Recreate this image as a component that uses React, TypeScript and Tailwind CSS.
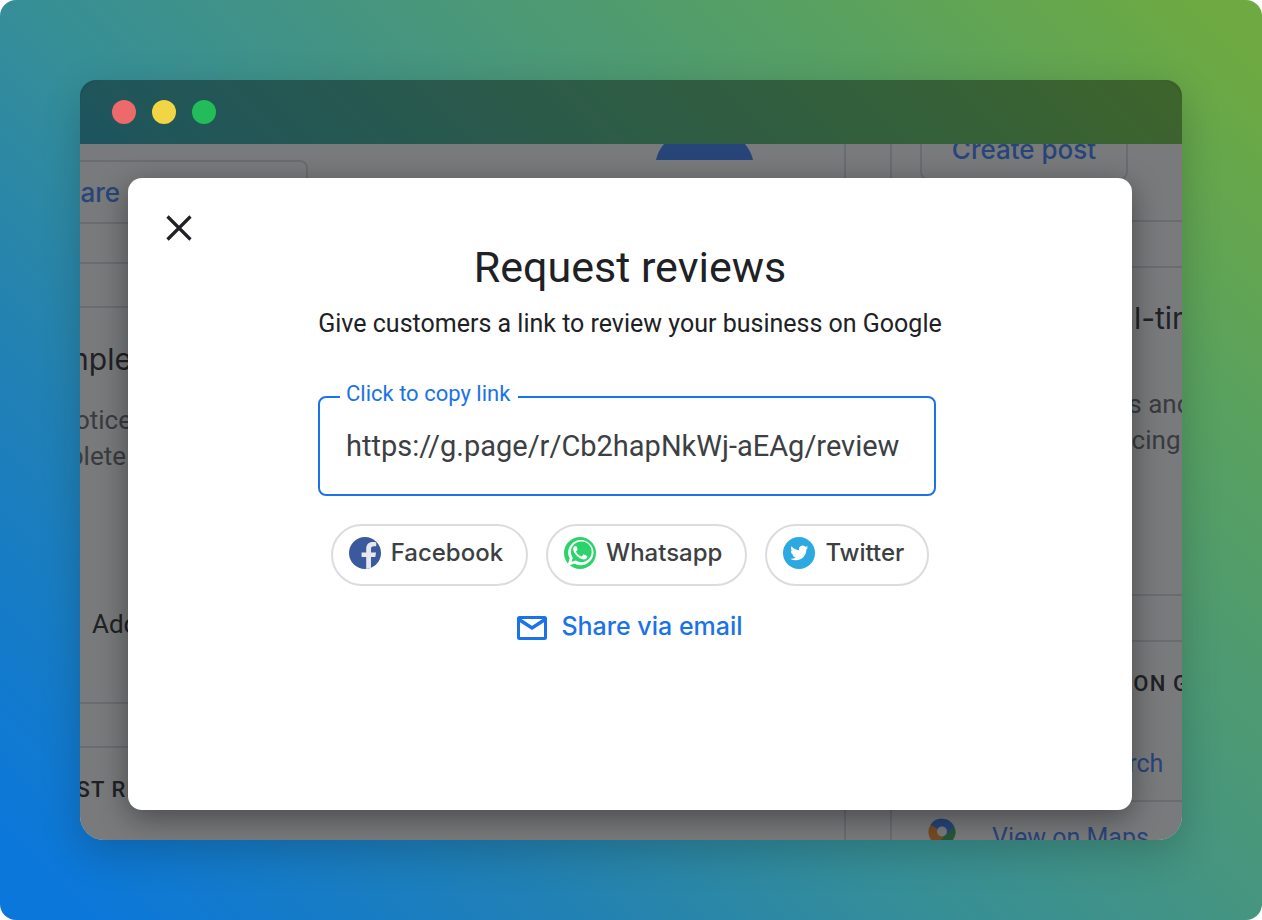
import React from "react";

function FacebookIcon() {
  return (
    <svg viewBox="0 0 32 32" className="size-8 shrink-0" aria-hidden="true">
      <circle cx="16" cy="16" r="16" fill="#3b5a9e" />
      <path
        d="M17.2 31.9V19.9h-4.6v-4.4h4.6v-3.4c0-4.4 2.6-7 6.6-7 1.4 0 2.6.1 3.4.3v3.9h-2.3c-2.3 0-2.9 1.1-2.9 2.8v3.4h5l-.7 4.4H22v10.9c-1.5.7-3.2 1.1-4.8 1.1z"
        fill="#e6e8ee"
      />
    </svg>
  );
}

function WhatsappIcon() {
  return (
    <svg viewBox="0 0 32 32" className="size-8 shrink-0" aria-hidden="true">
      <circle cx="16" cy="16" r="16" fill="#2bd46a" />
      <path d="M4.200 28l1.900-6.600A12.200 12.200 0 1 1 10.800 26.200z" fill="#fff" stroke="#fff" strokeWidth="1" strokeLinejoin="round" />
      <path d="M7.600 24.700l1.100-4A10.400 10.400 0 1 1 11.700 23.600z" fill="#2bd46a" />
      <path
        d="M12.700 9.800c-.3-.7-.6-.7-1-.7-1.200 0-2.500 1.100-2.500 3.200 0 2 1.400 3.900 1.700 4.300 1.700 2.500 3.900 4.500 6.600 5.500 2.500.9 4.800.6 5.600-1.500.3-.8.3-1.500.1-1.700-.3-.3-2.700-1.400-3.200-1.500-.4-.1-.6 0-.9.400l-1.100 1.400c-.3.300-.6.300-1 .1-2.200-1-3.700-2.400-4.800-4.400-.2-.4-.1-.6.200-.9.500-.5 1-1.200 1.100-1.500.1-.3 0-.6-.1-.8z"
        fill="#fff"
      />
    </svg>
  );
}

function TwitterIcon() {
  return (
    <svg viewBox="0 0 32 32" className="size-8 shrink-0" aria-hidden="true">
      <circle cx="16" cy="16" r="16" fill="#2ca9e1" />
      <g transform="translate(7.2 7) scale(0.75)">
        <path
          d="M23.953 4.570a10 10 0 0 1-2.825.775 4.958 4.958 0 0 0 2.163-2.723c-.951.555-2.005.959-3.127 1.184a4.920 4.920 0 0 0-8.384 4.482C7.690 8.095 4.067 6.130 1.640 3.162a4.822 4.822 0 0 0-.666 2.475c0 1.710.870 3.213 2.188 4.096a4.904 4.904 0 0 1-2.228-.616v.060a4.923 4.923 0 0 0 3.946 4.827 4.996 4.996 0 0 1-2.212.085 4.936 4.936 0 0 0 4.604 3.417 9.867 9.867 0 0 1-6.102 2.105c-.39 0-.779-.023-1.170-.067a13.995 13.995 0 0 0 7.557 2.209c9.053 0 13.998-7.496 13.998-13.985 0-.21 0-.42-.015-.63A9.935 9.935 0 0 0 24 4.590z"
          fill="#fff"
        />
      </g>
    </svg>
  );
}

function MailIcon() {
  return (
    <svg viewBox="0 0 30 24" className="mt-1 h-6 w-[30px] shrink-0" aria-hidden="true">
      <rect x="1.500" y="1.500" width="27" height="21" rx="1" fill="none" stroke="#1a73e8" strokeWidth="3" />
      <path d="M2 3.500L15 12l13-8.500" fill="none" stroke="#1a73e8" strokeWidth="3.400" />
    </svg>
  );
}

function MapsIcon() {
  return (
    <svg viewBox="0 0 28 36" className="h-9 w-7 shrink-0" aria-hidden="true">
      <path d="M3 6A13.500 13.500 0 0 0 3 22l8-4 0-8z" fill="#fb8720" />
      <path d="M26 8A13.500 13.500 0 0 1 25 22L14 36 7 27 20 10z" fill="#34a853" />
      <path d="M2.500 7A13.500 13.500 0 0 1 26 8L18 18 10 11z" fill="#347bf5" />
      <path d="M3 22l4 5 9-8-6-3z" fill="#fb8720" />
      <circle cx="14" cy="13.500" r="5" fill="#fff" />
    </svg>
  );
}

function BackgroundPage() {
  return (
    <div aria-hidden="true" className="absolute inset-0 flex gap-11 overflow-hidden bg-white whitespace-nowrap">
      <div className="flex w-[766px] shrink-0 flex-col gap-[42px]">
        <div className="flex h-[120px] shrink-0 items-start border-r-2 border-b-2 border-[#dadce0]">
          <div className="mt-4 flex h-16 w-[228px] items-center rounded-tr-lg border-t-2 border-r-2 border-b-2 border-[#dadce0] font-['Inter',sans-serif] text-[26px] font-medium text-[#347bf5]">
            <span className="flex w-10 justify-end">Share</span>
          </div>
          <svg viewBox="0 0 98 16" className="ml-[348px] h-4 w-[98px]">
            <path d="M0 16Q2 7 8 0h81q6 7 8 16z" fill="#347bf5" />
          </svg>
        </div>
        <div className="flex h-[398px] shrink-0 flex-col border-y-2 border-r-2 border-[#dadce0]">
          <p className="mt-8 flex w-[52px] justify-end font-['Inter',sans-serif] text-[30px] leading-[38px] text-[#202124]">Comple</p>
          <p className="mt-6 flex w-[52px] justify-end font-['Roboto',sans-serif] text-[26px] leading-9 text-[#5f6368]">Notice</p>
          <p className="flex w-[46px] justify-end font-['Roboto',sans-serif] text-[26px] leading-9 text-[#5f6368]">complete</p>
          <p className="mt-[132px] pl-3 font-['Roboto',sans-serif] text-[26px] leading-9 text-[#202124]">Add</p>
        </div>
        <div className="h-[200px] shrink-0 border-t-2 border-r-2 border-[#dadce0] pt-6">
          <p className="flex w-[60px] justify-end font-['Roboto',sans-serif] text-[22px] leading-9 font-medium tracking-wider text-[#202124]">LATEST RE</p>
        </div>
      </div>
      <div className="flex w-[400px] shrink-0 flex-col gap-11">
        <div className="h-[78px] shrink-0 border-b-2 border-l-2 border-[#dadce0] pl-7">
          <div className="flex h-9 w-[208px] justify-center rounded-b-lg border-x-2 border-b-2 border-[#dadce0] font-['Inter',sans-serif] text-[26px] leading-3 font-medium text-[#347bf5]">
            Create post
          </div>
        </div>
        <div className="h-[330px] shrink-0 border-y-2 border-l-2 border-[#dadce0] pt-8 pl-7">
          <p className="font-['Inter',sans-serif] text-[30px] leading-9 text-[#202124]">Get seen in real-time</p>
          <p className="mt-[50px] font-['Roboto',sans-serif] text-[26px] leading-9 text-[#5f6368]">Create smarter ads and</p>
          <p className="font-['Roboto',sans-serif] text-[26px] leading-9 text-[#5f6368]">track them introducing</p>
        </div>
        <div className="flex h-[400px] shrink-0 flex-col border-t-2 border-l-2 border-[#dadce0] font-['Roboto',sans-serif]">
          <p className="mt-6 pl-14 text-[22px] leading-9 font-medium tracking-wider text-[#202124]">YOUR BUSINESS ON GOOGLE</p>
          <p className="mt-11 pl-[100px] text-[25px] leading-9 text-[#347bf5]">View on Search</p>
          <div className="mt-[18px] flex items-start gap-9 border-t-2 border-[#dadce0] pt-4 pl-9">
            <MapsIcon />
            <span className="text-[25px] leading-10 text-[#347bf5]">View on Maps</span>
          </div>
        </div>
      </div>
    </div>
  );
}

function ShareButton({ icon, label }: { icon: React.ReactNode; label: string }) {
  return (
    <button
      type="button"
      className="flex h-[62px] items-center gap-2.5 rounded-full border-2 border-[#dadce0] pr-[23px] pb-1 pl-4 font-['Inter',sans-serif] text-[24px] font-medium text-[#3c4043]"
    >
      {icon}
      {label}
    </button>
  );
}

function RequestReviewsDialog() {
  return (
    <section
      role="dialog"
      aria-labelledby="dialog-title"
      className="flex flex-1 flex-col items-center rounded-[14px] bg-white font-['Roboto',sans-serif] text-[#202124] shadow-[0_8px_30px_rgba(0,0,0,0.4)]"
    >
      <div className="flex w-full px-[38px] pt-[37px]">
        <button type="button" aria-label="Close" className="size-[26px]">
          <svg viewBox="0 0 26 26" className="size-[26px]">
            <path d="M1.500 1.500l23 23M24.500 1.500l-23 23" stroke="#202124" strokeWidth="3.200" />
          </svg>
        </button>
      </div>
      <h1 id="dialog-title" className="text-[43px] leading-[52px]">Request reviews</h1>
      <p className="mt-[15px] text-[25px] leading-8">Give customers a link to review your business on Google</p>
      <div className="mt-14 w-full max-w-[624px] pr-1.5">
        <div className="relative">
          <label htmlFor="review-link" className="absolute -top-4 left-[22px] bg-white pr-2 pl-1.5 text-[22px] leading-7 text-[#1a73e8]">
            Click to copy link
          </label>
          <input
            id="review-link"
            readOnly
            defaultValue="https://g.page/r/Cb2hapNkWj-aEAg/review"
            className="h-[100px] w-full rounded-lg border-2 border-[#1a73e8] px-[26px] text-[29px] text-[#3c4043] outline-none"
          />
        </div>
      </div>
      <div className="mt-7 flex gap-[18px]">
        <ShareButton icon={<FacebookIcon />} label="Facebook" />
        <ShareButton icon={<WhatsappIcon />} label="Whatsapp" />
        <ShareButton icon={<TwitterIcon />} label="Twitter" />
      </div>
      <a href="#email" className="mt-6 flex items-center gap-3.5 font-['Inter',sans-serif] text-[25px] leading-8 font-medium text-[#1a73e8]">
        <MailIcon />
        Share via email
      </a>
    </section>
  );
}

export default function App() {
  return (
    <div className="bg-white">
      <main className="flex min-h-screen flex-col rounded-2xl bg-[linear-gradient(45deg,#0b77da_0%,#0b77da_4%,#2080b6_25%,#358e98_42%,#469580_58%,#57a062_78%,#6eaa41_97%)] p-20">
        <div className="flex flex-1 flex-col rounded-3xl shadow-[0_12px_40px_rgba(0,0,0,0.2)]">
          <header className="flex h-16 items-center gap-4 rounded-t-2xl bg-black/40 px-8">
            <span className="size-6 rounded-full bg-[#ee6a6a]" />
            <span className="size-6 rounded-full bg-[#f2d544]" />
            <span className="size-6 rounded-full bg-[#22bd59]" />
          </header>
          <div className="relative flex flex-1 overflow-hidden rounded-b-3xl">
            <BackgroundPage />
            <div className="relative flex flex-1 bg-[#202124]/60 pt-[34px] pr-[50px] pb-[30px] pl-12">
              <RequestReviewsDialog />
            </div>
          </div>
        </div>
      </main>
    </div>
  );
}
